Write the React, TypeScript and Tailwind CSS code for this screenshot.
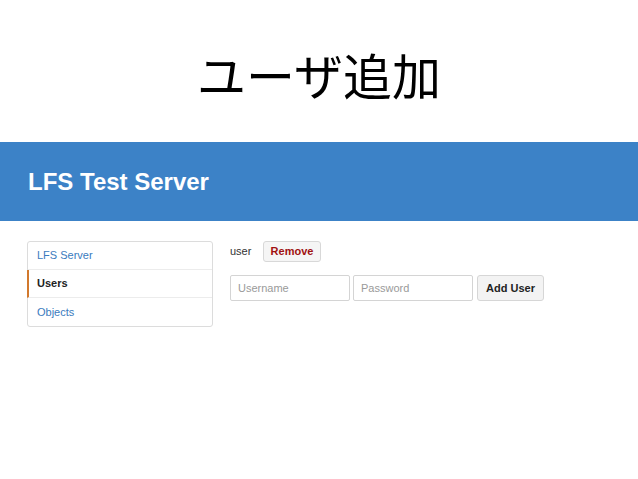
import React from "react";

const sans = { fontFamily: '"Liberation Sans", Arial, sans-serif' };

export default function App() {
  return (
    <div className="w-[638px] h-[479px] bg-white overflow-hidden" style={sans}>
      {/* Slide title */}
      <div className="h-[142px] pt-[42px] flex justify-center">
        <h1
          className="text-[49px] leading-[64px] text-black font-normal"
          style={{ fontFamily: '"Noto Sans CJK JP", "Noto Sans", sans-serif' }}
        >
          ユーザ追加
        </h1>
      </div>

      {/* Header bar */}
      <div className="h-[79px] bg-[#3c82c7] flex items-center px-[28px]">
        <span className="text-white text-[24px] font-bold">LFS Test Server</span>
      </div>

      {/* Content */}
      <div className="flex pt-[20px] px-[27px] gap-[17px]">
        <div className="w-[186px] border border-[#dcdcdc] rounded-[3px] flex flex-col text-[11px]">
          <div className="h-[28px] px-[9px] flex items-center text-[#3a7bbe] border-b border-[#ececec]">
            LFS Server
          </div>
          <div className="h-[28px] px-[8px] flex items-center font-bold text-[#222] border-b border-[#ececec] border-l-2 border-l-[#d2792d] -ml-px">
            Users
          </div>
          <div className="h-[28px] px-[9px] flex items-center text-[#3a7bbe]">Objects</div>
        </div>

        <div className="flex flex-col gap-[13px] text-[11px]">
          <div className="flex items-center h-[21px] gap-[13px]">
            <span className="text-[#333] w-[20px]">user</span>
            <button className="h-[21px] w-[58px] border border-[#d8d8d8] rounded-[3px] bg-[#f5f5f5] text-[#a01010] font-bold">
              Remove
            </button>
          </div>
          <div className="flex items-center">
            <input
              className="h-[26px] w-[120px] border border-[#d4d4d4] rounded-[2px] px-[7px] text-[11px] placeholder:text-[#9a9a9a] outline-none"
              placeholder="Username"
            />
            <input
              className="h-[26px] w-[120px] ml-[3px] border border-[#d4d4d4] rounded-[2px] px-[7px] text-[11px] placeholder:text-[#9a9a9a] outline-none"
              placeholder="Password"
            />
            <button className="h-[26px] w-[67px] ml-[4px] border border-[#d6d6d6] rounded-[3px] bg-[#f3f3f3] text-[#222] font-bold">
              Add User
            </button>
          </div>
        </div>
      </div>
    </div>
  );
}
